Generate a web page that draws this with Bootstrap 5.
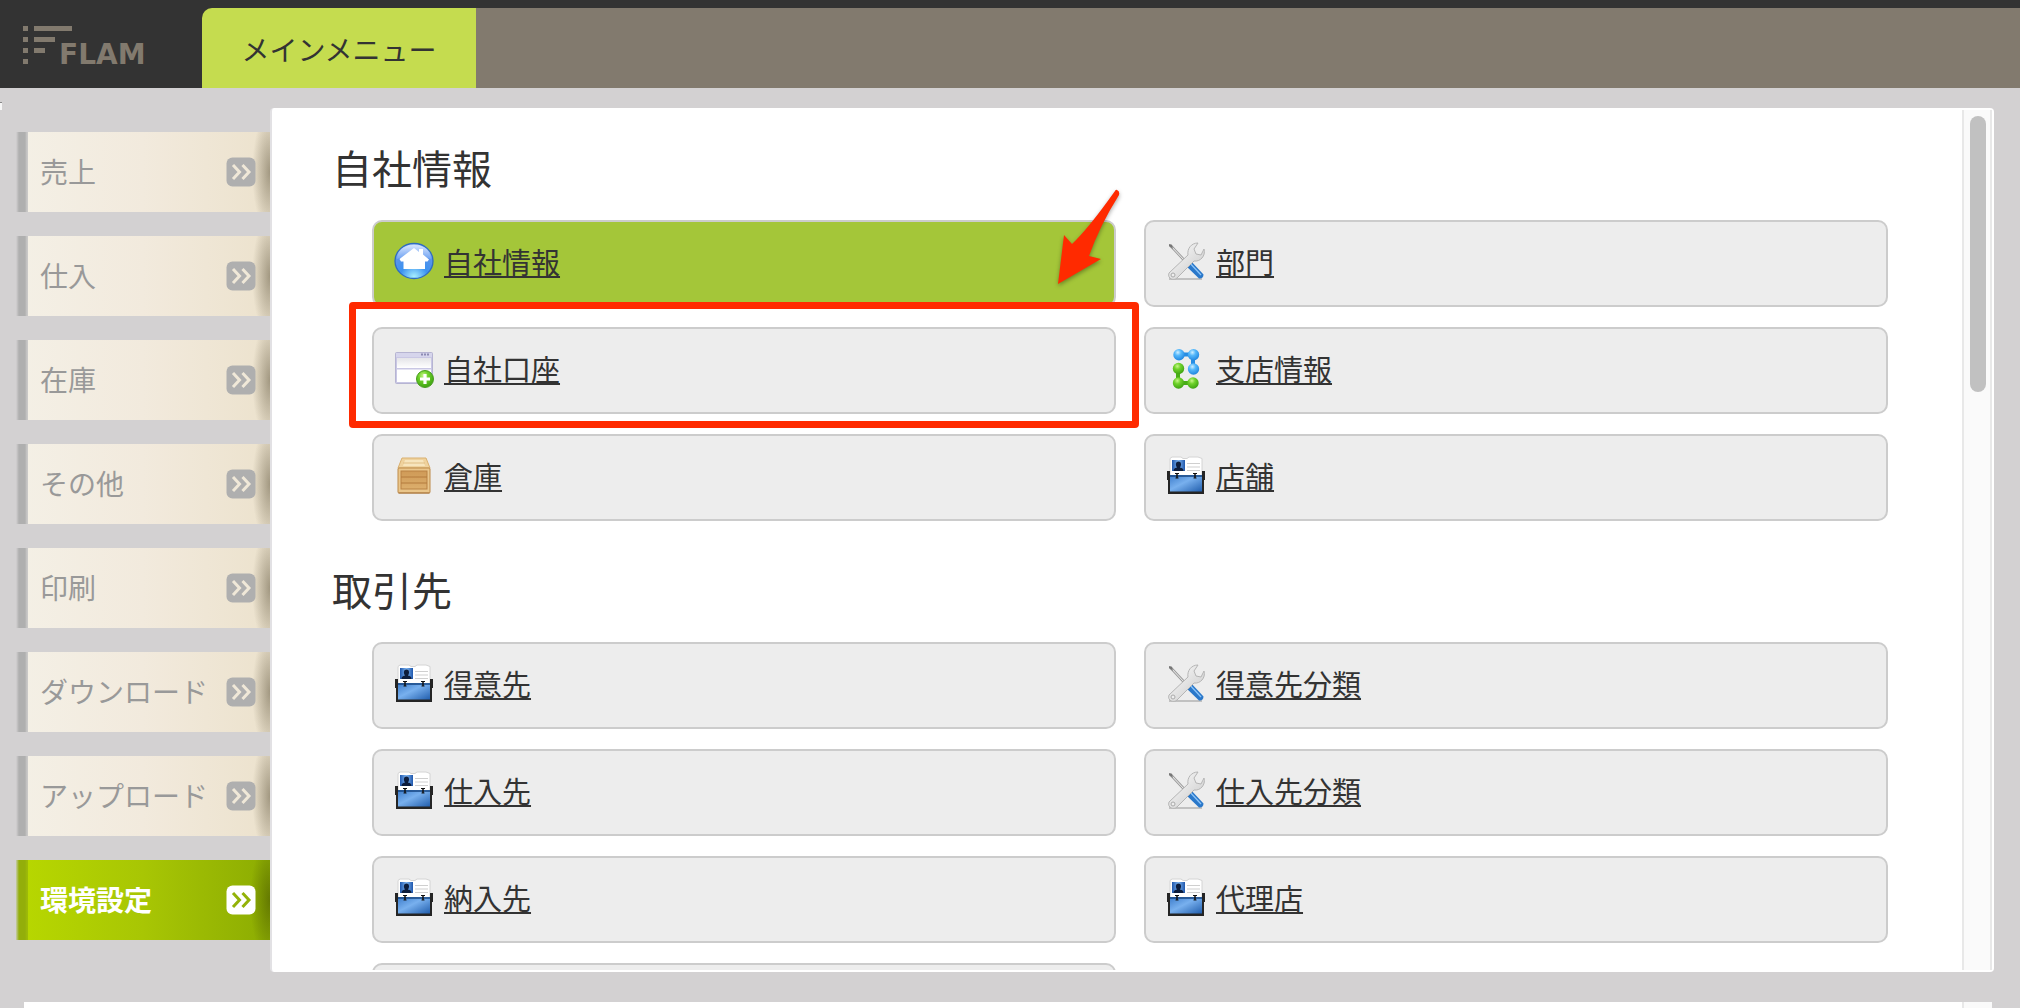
<!DOCTYPE html>
<html lang="ja">
<head>
<meta charset="utf-8">
<meta name="viewport" content="width=device-width, initial-scale=1">
<title>FLAM</title>
<link href="https://cdn.jsdelivr.net/npm/bootstrap@5.3.0/dist/css/bootstrap.min.css" rel="stylesheet">
<style>
body{font-family:"Liberation Sans","Noto Sans CJK JP",sans-serif;background:#d3d1d2;color:#333;height:100vh;overflow:hidden}
.topbar{background:#827a6e;border-top:8px solid #333;height:88px}
.brand-box{background:#333;width:202px;margin-top:-8px}
.tab-wrap{background:#333}
.tab-main{background:#c5dc4f;color:#333;width:274px;font-size:28px;line-height:40px;border-radius:10px 0 0 0;padding-top:8px}
.workspace{min-height:0;padding:20px 26px 0 16px;position:relative}
.workspace::before{content:"";position:absolute;left:0;top:14px;width:2px;height:8px;background:#f6f6f6;border-top:1px solid #888}
.side-menu{width:254px;padding-top:24px;gap:24px}
.side-link{height:80px;padding:4px 14px 0 24px;color:#999;font-size:28px;line-height:40px;--chev:#f0e8d8;
 background:linear-gradient(90deg,#d3d1d2,#afafaf 3px,#afafaf 9px,#c9c8c7 11px,#c9c8c7) 0 0/12px 100% no-repeat,radial-gradient(ellipse 18px 60px at 100% 50%,rgba(80,70,45,.48),transparent),linear-gradient(90deg,#f4f0e6,#f2eadd 50%,#ece2cd)}
.side-link svg{width:30px;height:30px;margin-bottom:4px;color:#afafaf}
.side-link.current{color:#fff;font-weight:700;--chev:#93b208;
 background:linear-gradient(90deg,#c6cca8,#93ae0a 3px,#93ae0a 9px,#9dba08 11px,#9dba08) 0 0/12px 100% no-repeat,radial-gradient(ellipse 20px 60px at 100% 50%,rgba(60,70,0,.5),transparent),linear-gradient(90deg,#b8d800,#a8c604 50%,#8cac02)}
.side-link.current svg{color:#fff}
.panel{background:#fff;border-left:2px solid #e2e1e4;border-radius:4px;padding:2px 2px 2px 0;min-width:0}
.panel-body{padding:30px 74px 0 60px;overflow:hidden;min-width:0}
.section-title{font-size:40px;line-height:60px;font-weight:400;margin-bottom:20px}
.menu-section{margin-bottom:41px}
.menu-grid{padding-left:40px}
.menu-grid .row{--bs-gutter-x:28px;--bs-gutter-y:20px}
.menu-link{height:87px;border:2px solid #ccc;border-radius:10px;background:#ededed;color:#333;padding:0 20px;gap:10px;font-size:29px;line-height:40px;
 text-decoration:none}
.menu-link span{text-decoration:underline;text-decoration-thickness:2px;text-underline-offset:2px;text-decoration-skip-ink:none}
.menu-link svg{width:40px;height:40px;margin-bottom:4px}
.menu-link.picked{background:#a4c639}
.highlight-box{position:absolute;left:-23px;right:-23px;top:-25px;bottom:-14px;border:7px solid #ff2a00;border-radius:4px;pointer-events:none;z-index:2}
.pointer-arrow{position:absolute;right:-3px;top:-34px;width:70px;height:104px;z-index:3;overflow:visible;filter:drop-shadow(0 2px 2px rgba(0,0,0,.35))}
.track{width:30px;background:#fafafa;border:solid #e8e8e8;border-width:0 2px;padding:6px 4px 6px 6px}
.thumb{height:276px;width:16px;background:#c1c1c1;border-radius:8px}
.next-panel{height:6px;background:#fff;margin:30px 28px 0 24px}
.next-track{width:30px;background:#fafafa;border-left:2px solid #e8e8e8}
</style>
<script src="https://cdn.jsdelivr.net/npm/bootstrap@5.3.0/dist/js/bootstrap.bundle.min.js"></script>
</head>
<body class="d-flex flex-column">
<svg width="0" height="0" class="position-absolute" aria-hidden="true">
 <defs>
  <radialGradient id="gHome" cx=".5" cy=".95" r=".9"><stop offset="0" stop-color="#a8f0ff"/><stop offset=".4" stop-color="#3c92f0"/><stop offset=".75" stop-color="#5a94ea"/><stop offset="1" stop-color="#b9d2fb"/></radialGradient>
  <linearGradient id="gGloss" x2="0" y2="1"><stop offset="0" stop-color="#dfeaff"/><stop offset="1" stop-color="#78a9f5"/></linearGradient>
  <linearGradient id="gPane" x2="0" y2="1"><stop offset="0" stop-color="#e4e4e8"/><stop offset="1" stop-color="#fff"/></linearGradient>
  <radialGradient id="gGreen" cx=".4" cy=".3" r=".7"><stop offset="0" stop-color="#c9f58a"/><stop offset=".4" stop-color="#6fd22a"/><stop offset="1" stop-color="#3fa312"/></radialGradient>
  <radialGradient id="gBlue" cx=".4" cy=".3" r=".7"><stop offset="0" stop-color="#d0efff"/><stop offset=".4" stop-color="#55b8fb"/><stop offset="1" stop-color="#2187e0"/></radialGradient>
  <linearGradient id="gCase" x2="1" y2="1"><stop offset="0" stop-color="#3c7ccb"/><stop offset=".45" stop-color="#78b0ee"/><stop offset="1" stop-color="#225fae"/></linearGradient>
  <linearGradient id="gPhoto" x2="1"><stop offset="0" stop-color="#1f57ad"/><stop offset=".5" stop-color="#7db4f0"/><stop offset="1" stop-color="#1f57ad"/></linearGradient>
  <linearGradient id="gWood" x2="0" y2="1"><stop offset="0" stop-color="#cf9a57"/><stop offset="1" stop-color="#dcae6c"/></linearGradient>
  <linearGradient id="gSteel" x2="1" y2="1"><stop offset="0" stop-color="#fff"/><stop offset="1" stop-color="#c6c6c6"/></linearGradient>
 </defs>
 <symbol id="i-next" viewBox="0 0 30 30"><rect x=".5" y=".5" width="29" height="29" rx="6" fill="currentColor"/><path d="M7 8l6.500 7-6.500 7M16.500 8l6.500 7-6.500 7" fill="none" stroke="var(--chev)" stroke-width="3"/></symbol>
 <symbol id="i-home" viewBox="0 0 40 40"><ellipse cx="20" cy="19" rx="19" ry="17.500" fill="url(#gHome)" stroke="#2f6cc0" stroke-width="1.300"/><path d="M3 17C4 7 12 3 20 3s16 4 17 14c-9-3-25-3-34 0z" fill="url(#gGloss)" opacity=".8"/><path d="M20 6l5 4V7h4v5.500l6 5-1.500 2H31V27H9.500v-7.500H7L5.500 17z" fill="#fff"/></symbol>
 <symbol id="i-window" viewBox="0 0 40 40"><rect x="1.500" y="3.500" width="37" height="31" rx="1" fill="#c9c7e4" stroke="#b6b4d2"/><rect x="2" y="4" width="36" height="4" fill="#d6d5ec"/><path d="M27 5.500h2m1 0h2m1 0h2" stroke="#8d8bb3" stroke-width="2"/><rect x="3" y="9" width="34" height="10" fill="url(#gPane)"/><rect x="3" y="20.500" width="34" height="12.500" fill="#fff"/><circle cx="31" cy="30" r="8.500" fill="url(#gGreen)" stroke="#4a9d20"/><path d="M31 25v10m-5-5h10" stroke="#fff" stroke-width="3.200"/></symbol>
 <symbol id="i-crate" viewBox="0 0 40 40"><path d="M8 2h24l4 10H4z" fill="#efd29d" stroke="#d9b070"/><path d="M11 4h18l2 6H9z" fill="#f7e5bd"/><path d="M9 7h22" stroke="#dfbd83"/><rect x="4" y="12" width="32" height="25" rx="1" fill="#eac68b" stroke="#bd8a49"/><rect x="7" y="15" width="26" height="18" fill="url(#gWood)" stroke="#b98245"/><path d="M7 21h26M7 27h26" stroke="#b37b3d"/><path d="M4.500 37h31" stroke="#a87740"/></symbol>
 <symbol id="i-tools" viewBox="0 0 40 40"><path d="M3 37h33" stroke="#999" stroke-width="1.500" opacity=".7"/><path d="M4 3l15 16" stroke="#9a9a9a" stroke-width="2.600"/><path d="M4 3l15 16" stroke="#f3f3f3"/><path d="M3 2l3 1 1 4-4-3z" fill="#777"/><path d="M19 19l4-2 14.500 15.500c0 3-2 4.500-4.500 4L18 22z" fill="#2a78ca"/><path d="M22 19l13 14" stroke="#8cc4f8" stroke-width="1.300"/><path d="M3 31L22 13c-1-6 3-12 10-12l-4 6 2 5 5 1 3-6c2 7-4 13-10 12L11 36c-3 3-10 1-8-5z" fill="url(#gSteel)" stroke="#b5b5b5"/><circle cx="7" cy="33" r="2" fill="#eee" stroke="#aaa"/></symbol>
 <symbol id="i-nodes" viewBox="0 0 40 40"><path d="M13 5.500h14v15" fill="none" stroke="#278de3" stroke-width="4"/><path d="M12 20v14h15" fill="none" stroke="#48ad16" stroke-width="4"/><g fill="url(#gBlue)"><circle cx="13" cy="5.700" r="5.700"/><circle cx="27.500" cy="5.700" r="5.700"/><circle cx="27.500" cy="20" r="5.700"/></g><g fill="url(#gGreen)"><circle cx="12.500" cy="19.500" r="5.700"/><circle cx="12.500" cy="34" r="5.700"/><circle cx="27" cy="34" r="5.700"/></g></symbol>
 <symbol id="i-cards" viewBox="0 0 40 40"><path d="M4 20V2.500L6 1h9l2 1.500h4L23 1h9l4 1.500V20z" fill="#fff" stroke="#d4d4d4"/><rect x="6" y="4" width="13" height="11" fill="url(#gPhoto)"/><path d="M7.500 15c0-3 2.500-3 3.500-3.500-2-3-1-6 1.500-6s3.500 3 1.500 6c1 .5 3.500.5 3.500 3.500z" fill="#0d1d3c"/><path d="M21 7.500h13M21 11h13M21 14.500h13" stroke="#cfcfcf"/><path d="M1 15h3v4h32v-4h3v9h-1v14H2V24H1z" fill="#252525"/><rect x="4" y="19" width="32" height="16.500" fill="url(#gCase)"/><path d="M4 20h32" stroke="#164580" stroke-width="1.500"/><path d="M11 17v5m18-5v5" stroke="#111" stroke-width="1.500"/><path d="M9 17.500h4m14 0h4M9.500 22h3m15 0h3" stroke="#111"/></symbol>
</svg>

<header class="topbar d-flex flex-shrink-0">
 <div class="brand-box flex-shrink-0">
  <svg width="202" height="88" role="img" aria-label="FLAM" fill="#827a6e">
   <path d="M23 26h5v5h-5zM23 37h5v5h-5zM23 48h5v5h-5zM23 59h5v5h-5zM34 26h38v5H34zM34 37h21v5H34zM34 48h11v5H34z"/>
   <text x="59" y="64" font-family="DejaVu Sans" font-weight="700" font-size="28">FLAM</text>
  </svg>
 </div>
 <div class="tab-wrap d-flex"><a href="#" class="tab-main d-flex align-items-center justify-content-center text-decoration-none">メインメニュー</a></div>
</header>

<main class="workspace d-flex flex-fill">
 <nav class="side-menu d-flex flex-column flex-shrink-0">
  <a href="#" class="side-link d-flex align-items-center justify-content-between text-decoration-none">売上<svg><use href="#i-next"/></svg></a>
  <a href="#" class="side-link d-flex align-items-center justify-content-between text-decoration-none">仕入<svg><use href="#i-next"/></svg></a>
  <a href="#" class="side-link d-flex align-items-center justify-content-between text-decoration-none">在庫<svg><use href="#i-next"/></svg></a>
  <a href="#" class="side-link d-flex align-items-center justify-content-between text-decoration-none">その他<svg><use href="#i-next"/></svg></a>
  <a href="#" class="side-link d-flex align-items-center justify-content-between text-decoration-none">印刷<svg><use href="#i-next"/></svg></a>
  <a href="#" class="side-link d-flex align-items-center justify-content-between text-decoration-none">ダウンロード<svg><use href="#i-next"/></svg></a>
  <a href="#" class="side-link d-flex align-items-center justify-content-between text-decoration-none">アップロード<svg><use href="#i-next"/></svg></a>
  <a href="#" class="side-link current d-flex align-items-center justify-content-between text-decoration-none" aria-current="page">環境設定<svg><use href="#i-next"/></svg></a>
 </nav>
 <div class="panel d-flex flex-fill">
  <div class="panel-body flex-fill">
   <section class="menu-section">
    <h2 class="section-title">自社情報</h2>
    <div class="menu-grid"><div class="row">
     <div class="col-6"><div class="position-relative"><a href="#" class="menu-link picked d-flex align-items-center"><svg><use href="#i-home"/></svg><span>自社情報</span></a>
      <svg class="pointer-arrow" viewBox="0 0 70 104" aria-hidden="true"><path d="M68 4Q71 5 70 9Q51 39 40 70L52 73L9 98L15 49L23 58Q39 43 66 5Q67 3 68 4z" fill="#ff2a00"/></svg></div></div>
     <div class="col-6"><a href="#" class="menu-link d-flex align-items-center"><svg><use href="#i-tools"/></svg><span>部門</span></a></div>
     <div class="col-6"><div class="position-relative"><a href="#" class="menu-link d-flex align-items-center"><svg><use href="#i-window"/></svg><span>自社口座</span></a><div class="highlight-box"></div></div></div>
     <div class="col-6"><a href="#" class="menu-link d-flex align-items-center"><svg><use href="#i-nodes"/></svg><span>支店情報</span></a></div>
     <div class="col-6"><a href="#" class="menu-link d-flex align-items-center"><svg><use href="#i-crate"/></svg><span>倉庫</span></a></div>
     <div class="col-6"><a href="#" class="menu-link d-flex align-items-center"><svg><use href="#i-cards"/></svg><span>店舗</span></a></div>
    </div></div>
   </section>
   <section class="menu-section">
    <h2 class="section-title">取引先</h2>
    <div class="menu-grid"><div class="row">
     <div class="col-6"><a href="#" class="menu-link d-flex align-items-center"><svg><use href="#i-cards"/></svg><span>得意先</span></a></div>
     <div class="col-6"><a href="#" class="menu-link d-flex align-items-center"><svg><use href="#i-tools"/></svg><span>得意先分類</span></a></div>
     <div class="col-6"><a href="#" class="menu-link d-flex align-items-center"><svg><use href="#i-cards"/></svg><span>仕入先</span></a></div>
     <div class="col-6"><a href="#" class="menu-link d-flex align-items-center"><svg><use href="#i-tools"/></svg><span>仕入先分類</span></a></div>
     <div class="col-6"><a href="#" class="menu-link d-flex align-items-center"><svg><use href="#i-cards"/></svg><span>納入先</span></a></div>
     <div class="col-6"><a href="#" class="menu-link d-flex align-items-center"><svg><use href="#i-cards"/></svg><span>代理店</span></a></div>
     <div class="col-6"><div class="menu-link"></div></div>
    </div></div>
   </section>
  </div>
  <div class="track flex-shrink-0"><div class="thumb"></div></div>
 </div>
</main>
<div class="next-panel d-flex justify-content-end flex-shrink-0"><div class="next-track"></div></div>
</body>
</html>
